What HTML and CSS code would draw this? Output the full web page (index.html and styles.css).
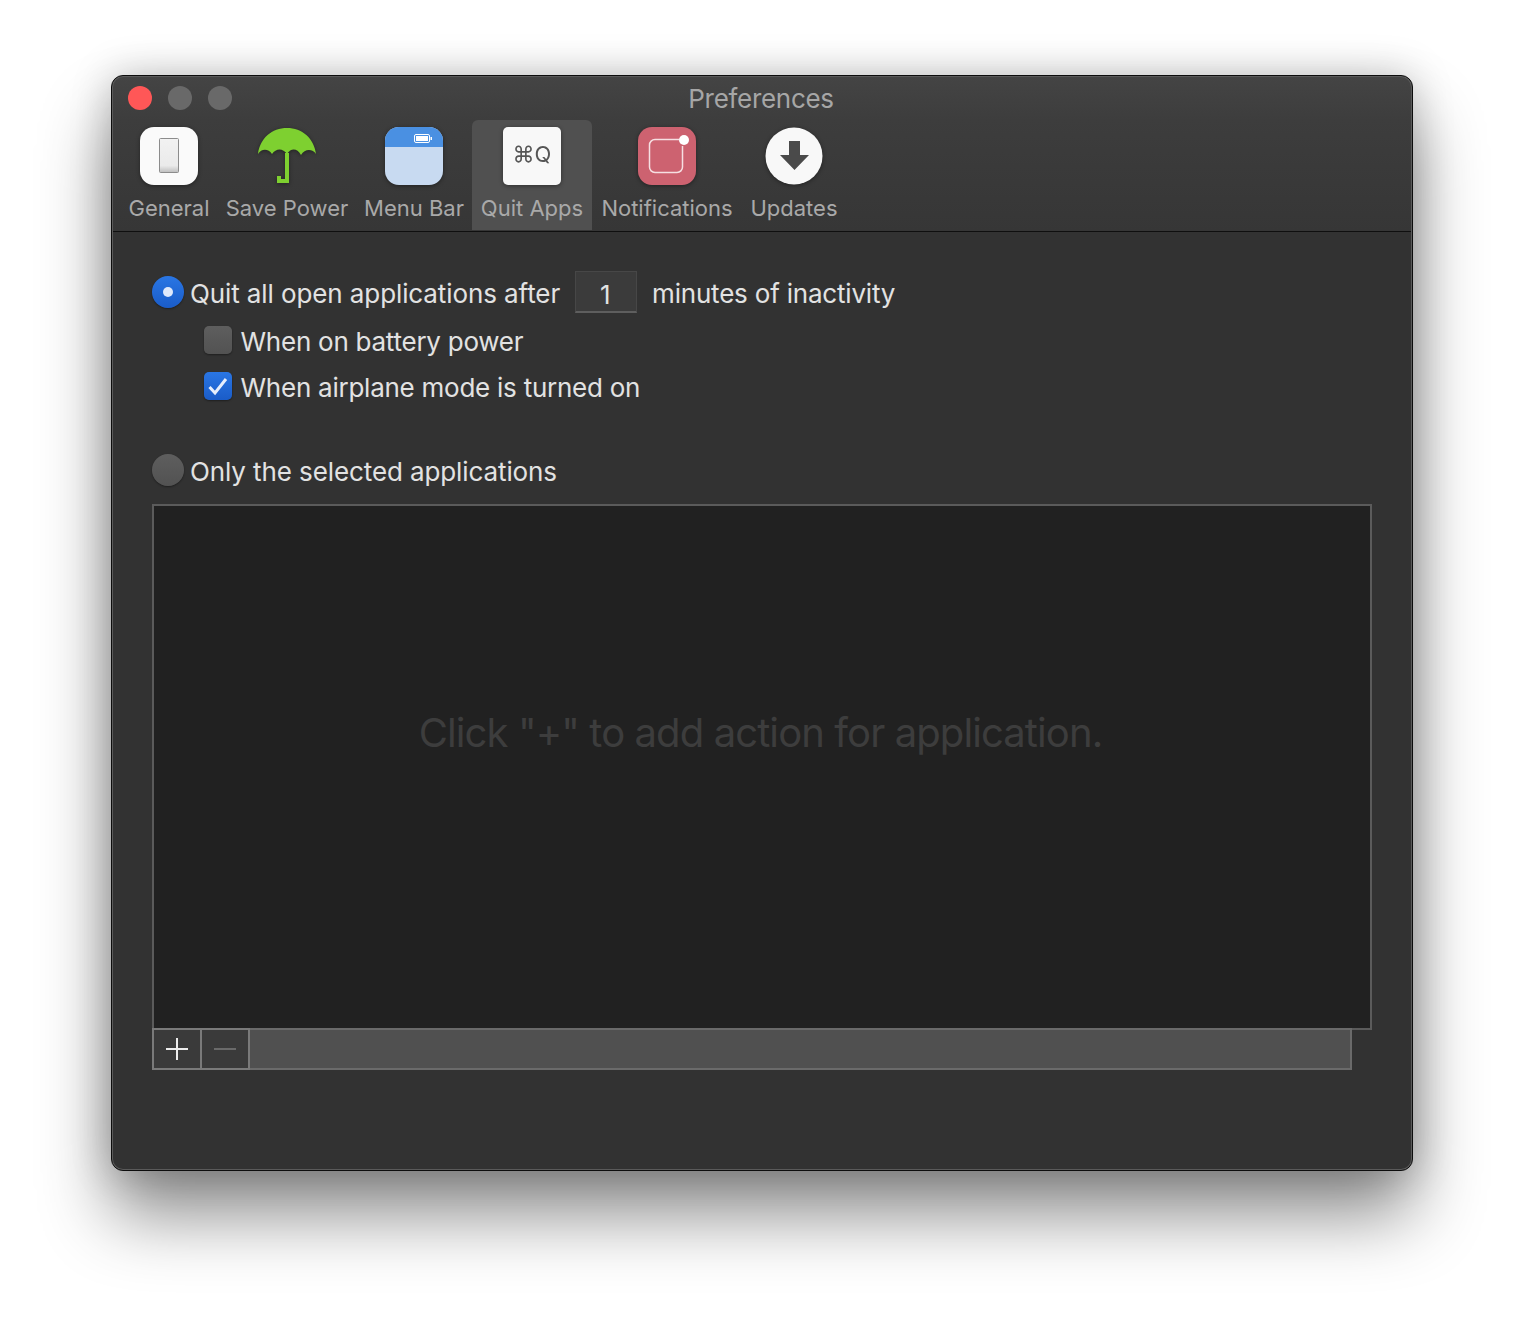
FILE: index.html
```html
<!DOCTYPE html>
<html lang="en">
<head>
  <meta charset="UTF-8">
  <title>Preferences</title>
  <link rel="stylesheet" href="styles.css">
</head>
<body>
  <div class="window">
    <div class="titlebar">
      <div class="lights">
        <span class="light red"></span>
        <span class="light"></span>
        <span class="light"></span>
      </div>
      <div class="title">Preferences</div>
    </div>

    <div class="toolbar">
      <div class="tab tab-general">
        <svg class="icon" viewBox="0 0 58 58">
          <defs>
            <linearGradient id="sw" x1="0" y1="0" x2="0" y2="1">
              <stop offset="0" stop-color="#f2f2f2"/>
              <stop offset=".8" stop-color="#eaeaea"/>
              <stop offset="1" stop-color="#bdbdbd"/>
            </linearGradient>
          </defs>
          <rect width="58" height="58" rx="14" fill="#fafafa"/>
          <rect x="19.5" y="11.5" width="19" height="34" rx="1" fill="url(#sw)" stroke="#8c8c8c"/>
        </svg>
        <span class="tab-label">General</span>
      </div>
      <div class="tab tab-power">
        <svg class="icon" viewBox="0 0 58 58">
          <path d="M0 27C2 11 14 1 29 1s27 10 29 26c-3-5-11-6-15 1-4-7-10-7-14-1-4-6-11-6-15 0C10 21 3 22 0 27z" fill="#7ed030"/>
          <path d="M29 26V54H21V49" fill="none" stroke="#7ed030" stroke-width="4"/>
        </svg>
        <span class="tab-label">Save Power</span>
      </div>
      <div class="tab tab-menu">
        <svg class="icon" viewBox="0 0 58 58">
          <rect width="58" height="58" rx="14" fill="#c8daf1"/>
          <path d="M0 20V14A14 14 0 0 1 14 0H44A14 14 0 0 1 58 14V20z" fill="#4a90e2"/>
          <rect x="29.5" y="7.5" width="15" height="8" rx="1.5" fill="none" stroke="#fff"/>
          <rect x="31" y="9" width="12" height="5" fill="#fff"/>
          <rect x="45.5" y="10" width="1.5" height="3" fill="#fff"/>
        </svg>
        <span class="tab-label">Menu Bar</span>
      </div>
      <div class="tab tab-quit selected">
        <div class="icon keycap">⌘Q</div>
        <span class="tab-label">Quit Apps</span>
      </div>
      <div class="tab tab-notif">
        <svg class="icon" viewBox="0 0 58 58">
          <rect width="58" height="58" rx="14" fill="#cd6270"/>
          <path d="M41 12.500H17A5.500 5.500 0 0 0 11.500 18V40A5.500 5.500 0 0 0 17 45.500H39A5.500 5.500 0 0 0 44.500 40V19" fill="none" stroke="#f6dfe2" stroke-width="1.500"/>
          <circle cx="46" cy="13" r="5" fill="#fff"/>
        </svg>
        <span class="tab-label">Notifications</span>
      </div>
      <div class="tab tab-updates">
        <svg class="icon" viewBox="0 0 58 58">
          <circle cx="29" cy="29" r="28.500" fill="#f8f8f8"/>
          <path d="M24 14H35V28H44L29.500 43 15 28H24z" fill="#4a4a4a"/>
        </svg>
        <span class="tab-label">Updates</span>
      </div>
    </div>

    <div class="content">
      <div class="row row-main">
        <span class="radio on"></span>
        <span class="row-text">Quit all open applications after</span>
        <span class="minutes">1</span>
        <span class="row-text">minutes of inactivity</span>
      </div>
      <div class="row row-sub">
        <span class="check"></span>
        <span class="row-text">When on battery power</span>
      </div>
      <div class="row row-sub">
        <span class="check on">
          <svg viewBox="0 0 28 28" width="28" height="28"><path d="M5.500 15L11 21 22 7" fill="none" stroke="#e6eefc" stroke-width="3"/></svg>
        </span>
        <span class="row-text">When airplane mode is turned on</span>
      </div>
      <div class="row row-only">
        <span class="radio"></span>
        <span class="row-text">Only the selected applications</span>
      </div>

      <div class="app-list">Click "+" to add action for application.</div>
      <div class="list-bar">
        <div class="bar-btn">
          <svg viewBox="0 0 24 24" width="24" height="24"><path d="M12 1V23M1 12H23" stroke="#ececec" stroke-width="2"/></svg>
        </div>
        <div class="bar-btn">
          <svg viewBox="0 0 24 24" width="24" height="24"><path d="M1 12H23" stroke="#6a6a6a" stroke-width="2"/></svg>
        </div>
        <div class="bar-fill"></div>
      </div>
    </div>
  </div>
</body>
</html>
```

FILE: styles.css
```css
html, body {
  margin: 0;
  height: 100%;
  background: #fff;
  overflow: hidden;
}
body {
  padding: 75px 0 0 111px;
  box-sizing: border-box;
  font-family: Inter, "Liberation Sans", sans-serif;
}
.window {
  display: flex;
  flex-direction: column;
  width: 1302px;
  height: 1096px;
  box-sizing: border-box;
  padding: 1px;
  border: 1px solid #0d0d0d;
  border-radius: 12px;
  background: #5a5a5a;
  box-shadow: 0 44px 70px rgba(0, 0, 0, .45), 0 0 40px rgba(0, 0, 0, .22);
  overflow: hidden;
}
.titlebar {
  display: grid;
  grid-template-columns: 1fr auto 1fr;
  align-items: center;
  flex: none;
  height: 43px;
  background: linear-gradient(#444, #3d3d3d);
  border-radius: 10px 10px 0 0;
}
.lights {
  display: flex;
  gap: 16px;
  padding-left: 15px;
  margin-top: -2px;
}
.light {
  width: 24px;
  height: 24px;
  border-radius: 50%;
  background: #696969;
}
.light.red {
  background: #ff5757;
}
.title {
  font-size: 26px;
  letter-spacing: -.3px;
  color: #a6a6a6;
  margin-right: 2px;
}
.toolbar {
  display: flex;
  flex: none;
  height: 111px;
  padding-left: 7px;
  background: linear-gradient(#3d3d3d, #363636);
  border-bottom: 1px solid #0f0f0f;
}
.tab {
  display: flex;
  flex-direction: column;
  align-items: center;
  box-sizing: border-box;
  padding-top: 7px;
  border-radius: 6px 6px 0 0;
  color: #a9a9a9;
  font-size: 22px;
  height: 110px;
}
.tab-general { width: 98px; }
.tab-power { width: 138px; }
.tab-menu { width: 116px; }
.tab-quit { width: 120px; }
.tab-notif { width: 150px; }
.tab-updates { width: 104px; }
.tab.selected {
  background: #505050;
}
.icon {
  display: block;
  width: 58px;
  height: 58px;
  filter: drop-shadow(0 1px 2px rgba(0, 0, 0, .4));
}
.keycap {
  display: flex;
  align-items: center;
  justify-content: center;
  border-radius: 5px;
  background: #f8f8f8;
  color: #565656;
  font-size: 22px;
  padding-bottom: 4px;
  box-sizing: border-box;
}
.tab-label {
  margin-top: 8px;
  line-height: 30px;
  white-space: nowrap;
}
.content {
  flex: 1;
  padding: 39px 39px 0;
  background: #323232;
  border-radius: 0 0 10px 10px;
  color: #e2e2e2;
  font-size: 26px;
  letter-spacing: -.1px;
}
.row {
  display: flex;
  align-items: center;
  white-space: nowrap;
}
.row-text {
  padding-top: 2px;
}
.minutes + .row-text {
  letter-spacing: -.2px;
}
.row-main {
  height: 42px;
  gap: 6px;
}
.row-sub {
  height: 46px;
  padding-left: 52px;
  gap: 8.5px;
  letter-spacing: -.25px;
}
.row-main + .row-sub {
  margin-top: 4px;
}
.row-only {
  height: 40px;
  margin-top: 41px;
  gap: 6px;
  margin-bottom: 14px;
}
.radio {
  width: 32px;
  height: 32px;
  border-radius: 50%;
  background: linear-gradient(#5e5e5e, #525252);
  box-shadow: 0 1px 2px rgba(0, 0, 0, .4);
  position: relative;
  flex: none;
}
.radio.on {
  background: linear-gradient(#2a76e4, #1a5cc8);
}
.radio.on::after {
  content: "";
  position: absolute;
  left: 11px;
  top: 11px;
  width: 10px;
  height: 10px;
  border-radius: 50%;
  background: #dfe9fb;
}
.check {
  width: 28px;
  height: 28px;
  border-radius: 5px;
  background: linear-gradient(#5e5e5e, #525252);
  box-shadow: 0 1px 2px rgba(0, 0, 0, .4);
  flex: none;
}
.check.on {
  background: linear-gradient(#2a76e4, #1a5cc8);
}
.check svg {
  display: block;
}
.minutes {
  width: 62px;
  height: 42px;
  box-sizing: border-box;
  margin: 0 9px;
  padding-left: 24px;
  line-height: 46px;
  background: #3b3b3b;
  border: 1px solid #474747;
  border-bottom: 2px solid #5e5e5e;
}
.app-list {
  display: flex;
  align-items: center;
  justify-content: center;
  box-sizing: border-box;
  height: 526px;
  padding: 0 3px 70px 0;
  background: #212121;
  border: 2px solid #5b5b5b;
  color: #3d3d3d;
  font-size: 40px;
  letter-spacing: -.9px;
}
.list-bar {
  display: flex;
  height: 42px;
  width: 1200px;
  margin-top: -2px;
  position: relative;
}
.bar-btn {
  display: flex;
  align-items: center;
  justify-content: center;
  width: 48px;
  box-sizing: border-box;
  background: #3a3a3a;
  border: 2px solid #7a7a7a;
  border-left: 0;
}
.bar-btn:first-child {
  width: 50px;
  border-left: 2px solid #7a7a7a;
}
.bar-fill {
  flex: 1;
  background: #505050;
  border: 2px solid #6a6a6a;
  border-left: 0;
}
```
